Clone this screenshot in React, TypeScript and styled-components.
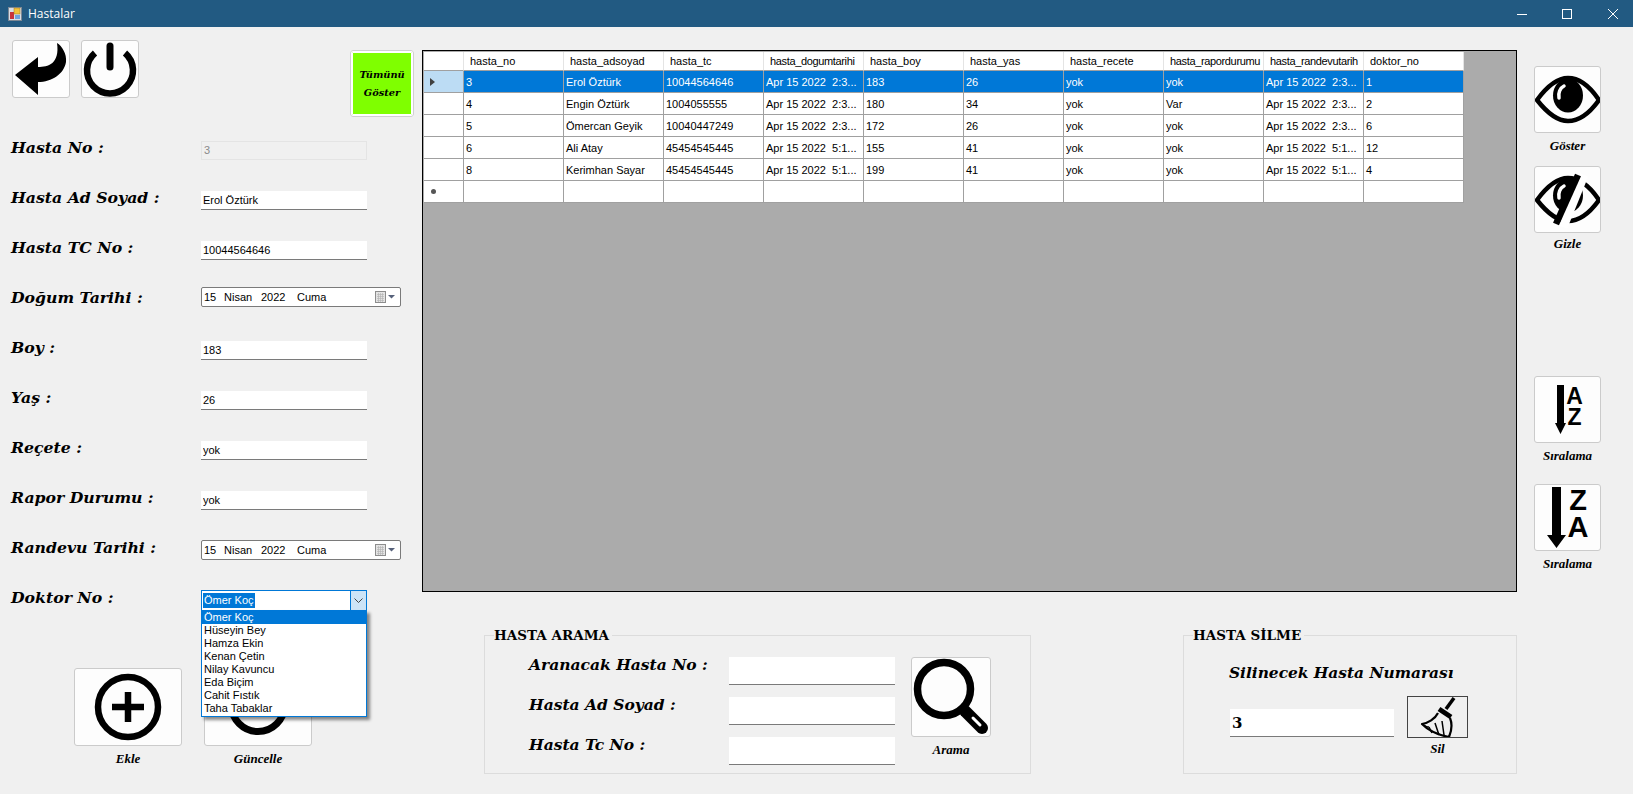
import * as React from "react";
import styled, { createGlobalStyle } from "styled-components";

const GlobalStyle = createGlobalStyle`
  html, body {
    margin: 0;
    padding: 0;
    background: #f0f0f0;
    overflow: hidden;
  }
  * { box-sizing: border-box; }
`;

const uiFont = `"Liberation Sans", Arial, sans-serif`;
const labelFont = `"DejaVu Serif", Georgia, serif`;
const captionFont = `"Liberation Serif", "Times New Roman", serif`;

const Window = styled.div`
  width: 1633px;
  height: 794px;
  display: flex;
  flex-direction: column;
  background: #f0f0f0;
  font-family: ${uiFont};
  overflow: hidden;
`;

const TitleBar = styled.div`
  height: 27px;
  flex: none;
  display: flex;
  align-items: center;
  background: #225a82;
  color: #fff;
  padding-left: 8px;
  font: 12px "Open Sans", sans-serif;
`;

const TitleText = styled.span`
  margin-left: 6px;
  flex: 1;
`;

const WinButton = styled.div<{ $w: number }>`
  width: ${(p) => p.$w}px;
  height: 27px;
  display: flex;
  align-items: center;
  justify-content: center;
`;

const Body = styled.div`
  flex: 1;
  display: flex;
  min-height: 0;
`;

const LeftPanel = styled.div`
  width: 422px;
  flex: none;
  padding-top: 13px;
`;

const TopRow = styled.div`
  height: 85px;
  display: flex;
  align-items: flex-start;
  padding-left: 12px;
`;

const SquareButton = styled.button<{ $w: number; $h: number; $ml?: number }>`
  width: ${(p) => p.$w}px;
  height: ${(p) => p.$h}px;
  margin-left: ${(p) => p.$ml ?? 0}px;
  padding: 0;
  flex: none;
  display: block;
  background: #fdfdfd;
  border: 1px solid #cbcbcb;
  border-radius: 3px;
  svg { display: block; width: 100%; height: 100%; }
`;

const ShowAllButton = styled.button`
  width: 64px;
  height: 67px;
  margin: 10px 0 0 211px;
  padding: 0;
  background: #7fff00;
  border: 2px solid #fff;
  outline: 1px solid #d0d0d0;
  outline-offset: -1px;
  border-radius: 3px;
  box-shadow: inset 0 0 0 1px #fff;
  color: #000;
  font: italic bold 9.8px/18px ${labelFont};
`;

const FormRow = styled.div`
  height: 50px;
  display: flex;
  align-items: center;
  padding-left: 11px;
`;

const FieldLabel = styled.div`
  width: 190px;
  flex: none;
  margin-top: -4px;
  color: #000;
  font: italic bold 15.7px/20px ${labelFont};
  white-space: nowrap;
`;

const TextBox = styled.input<{ $disabled?: boolean }>`
  width: 166px;
  height: 19px;
  padding: 0 2px;
  border: none;
  border-bottom: 1px solid #7a7a7a;
  background: #fff;
  color: #000;
  font: 11px ${uiFont};
  outline: none;
  ${(p) =>
    p.$disabled &&
    `
    background: #f0f0f0;
    border: 1px solid #e4e4e4;
    color: #8a8a8a;
  `}
`;

const DateBox = styled.div<{ $lift?: boolean }>`
  width: 200px;
  height: 20px;
  margin-top: ${(p) => (p.$lift ? "-6px" : "0")};
  display: flex;
  align-items: center;
  padding: 0 5px 0 2px;
  background: #fff;
  border: 1px solid #7a7a7a;
  border-radius: 2px;
  font-size: 11px;
  color: #000;
`;

const DatePart = styled.span<{ $w: number }>`
  width: ${(p) => p.$w}px;
  flex: none;
`;

const DateIcon = styled.span`
  margin-left: auto;
  display: flex;
`;

const ComboWrap = styled.div`
  position: relative;
  width: 166px;
`;

const ComboBox = styled.div`
  height: 21px;
  display: flex;
  align-items: center;
  padding-left: 1px;
  background: #fff;
  border: 1px solid #0078d7;
  font-size: 11px;
`;

const ComboValue = styled.span`
  background: #0078d7;
  color: #fff;
  padding: 1px;
  line-height: 13px;
`;

const ComboArrow = styled.span`
  margin-left: auto;
  width: 16px;
  height: 19px;
  display: flex;
  align-items: center;
  justify-content: center;
  background: #cce4f7;
  border-left: 1px solid #0078d7;
`;

const DropList = styled.ul`
  position: absolute;
  top: 20px;
  left: 0;
  width: 166px;
  height: 107px;
  margin: 0;
  padding: 0;
  list-style: none;
  background: #fff;
  border: 1px solid #0078d7;
  box-shadow: 3px 3px 3px rgba(0, 0, 0, 0.45);
  z-index: 5;
`;

const DropItem = styled.li<{ $active?: boolean }>`
  height: 13px;
  padding-left: 2px;
  font-size: 11px;
  line-height: 13px;
  background: ${(p) => (p.$active ? "#0078d7" : "#fff")};
  color: ${(p) => (p.$active ? "#fff" : "#000")};
`;

const ActionRow = styled.div`
  display: flex;
  margin: 43px 0 0 74px;
  gap: 22px;
`;

const ToolItem = styled.div<{ $mt?: number; $w?: number }>`
  width: ${(p) => (p.$w ? `${p.$w}px` : "auto")};
  margin-top: ${(p) => p.$mt ?? 0}px;
  display: flex;
  flex-direction: column;
  align-items: center;
`;

const Caption = styled.div<{ $mt?: number }>`
  margin-top: ${(p) => p.$mt ?? 1}px;
  color: #000;
  font: italic bold 13px/24px ${captionFont};
  white-space: nowrap;
`;

const Center = styled.div`
  width: 1095px;
  flex: none;
  padding-top: 23px;
`;

const GridFrame = styled.div`
  height: 542px;
  background: #ababab;
  border: 1px solid #000;
  overflow: hidden;
`;

const DataTable = styled.table`
  border-collapse: separate;
  border-spacing: 0;
  table-layout: fixed;
  width: 1040px;
  margin: 1px 0 0 1px;
  background: #fff;
  font-size: 11px;
  color: #000;
`;

const HeadCell = styled.th<{ $corner?: boolean; $tight?: boolean }>`
  width: ${(p) => (p.$corner ? 40 : 100)}px;
  height: 19px;
  padding: 0 0 0 6px;
  font-weight: normal;
  text-align: left;
  white-space: nowrap;
  overflow: hidden;
  letter-spacing: ${(p) => (p.$tight ? "-0.35px" : "0")};
  border-right: 1px solid #e4e4e4;
  border-bottom: 1px solid #a0a0a0;
`;

const RowHead = styled.td<{ $active?: boolean }>`
  height: 22px;
  padding: 0 0 0 6px;
  background: ${(p) => (p.$active ? "#bcdcf4" : "#fff")};
  border-right: 1px solid #a0a0a0;
  border-bottom: 1px solid #a0a0a0;
`;

const Cell = styled.td<{ $active?: boolean }>`
  height: 22px;
  padding: 0 0 0 2px;
  white-space: pre;
  overflow: hidden;
  background: ${(p) => (p.$active ? "#0078d7" : "#fff")};
  color: ${(p) => (p.$active ? "#fff" : "#000")};
  border-right: 1px solid #a0a0a0;
  border-bottom: 1px solid #a0a0a0;
`;

const Pointer = styled.span`
  display: block;
  width: 0;
  height: 0;
  border-left: 5px solid #404040;
  border-top: 4px solid transparent;
  border-bottom: 4px solid transparent;
`;

const NewRowMark = styled.span`
  display: block;
  width: 5px;
  height: 5px;
  margin-left: 1px;
  border-radius: 50%;
  background: #555;
`;

const BottomRow = styled.div`
  display: flex;
  justify-content: space-between;
  margin: 43px 0 0 62px;
`;

const Group = styled.div<{ $w: number }>`
  position: relative;
  width: ${(p) => p.$w}px;
  height: 139px;
  border: 1px solid #dcdcdc;
`;

const GroupTitle = styled.div`
  position: absolute;
  top: -9px;
  left: 9px;
  padding: 0 3px 0 0;
  background: #f0f0f0;
  color: #000;
  font: bold 13.5px/17px ${labelFont};
  white-space: nowrap;
`;

const SearchLayout = styled.div`
  display: flex;
  padding: 21px 0 0 44px;
`;

const SearchFields = styled.div`
  width: 382px;
  flex: none;
  display: flex;
  flex-direction: column;
  gap: 12px;
`;

const SearchRow = styled.div`
  display: flex;
  height: 28px;
`;

const SearchLabel = styled.div`
  width: 200px;
  flex: none;
  font: italic bold 15.5px/15px ${labelFont};
  white-space: nowrap;
  color: #000;
`;

const WideInput = styled.input<{ $w: number; $bold?: boolean }>`
  width: ${(p) => p.$w}px;
  height: 28px;
  padding: 0 2px;
  border: none;
  border-bottom: 1px solid #7a7a7a;
  background: #fff;
  outline: none;
  color: #000;
  font: ${(p) => (p.$bold ? `bold 15px ${labelFont}` : `11px ${uiFont}`)};
`;

const DeleteTitle = styled.div`
  margin: 27px 0 0 45px;
  color: #000;
  font: italic bold 15.4px/20px ${labelFont};
  white-space: nowrap;
`;

const DeleteRow = styled.div`
  display: flex;
  align-items: flex-start;
  margin: 13px 0 0 46px;
`;

const DeleteInputWrap = styled.div`
  margin-top: 13px;
  width: 177px;
  flex: none;
`;

const BroomButton = styled.button`
  width: 61px;
  height: 42px;
  padding: 0;
  display: block;
  background: #f0f0f0;
  border: 1px solid #444;
  svg { display: block; width: 100%; height: 100%; }
`;

const RightPanel = styled.div`
  flex: 1;
  padding: 39px 0 0 17px;
`;

const SortLetter = styled.text`
  font-family: ${uiFont};
  font-weight: bold;
  text-anchor: middle;
  fill: #000;
`;

const BackIcon = () => (
  <svg viewBox="0 0 56 56">
    <path d="M2 34 L25 16 V26 C35 26 47 23 44 2 C49 5 54 13 53 21 C51 33 39 41 25 41 V54 Z" fill="#000" />
  </svg>
);

const PowerIcon = () => (
  <svg viewBox="0 0 56 56" fill="none" stroke="#000">
    <path d="M13 12 A23 23 0 1 0 43 12" strokeWidth="6.5" />
    <path d="M28 5 V26" strokeWidth="7" strokeLinecap="round" />
  </svg>
);

const PlusIcon = () => (
  <svg viewBox="0 0 106 76" fill="none" stroke="#000">
    <circle cx="53" cy="38" r="30" strokeWidth="6.5" />
    <path d="M53 23 V53 M37 38 H69" strokeWidth="6.5" />
  </svg>
);

const RingIcon = () => (
  <svg viewBox="0 0 106 76" fill="none" stroke="#000">
    <circle cx="53" cy="36" r="26.5" strokeWidth="7" />
  </svg>
);

const eyeOutline = "M2 33 C13 18 23 11 33 11 C44 11 54 18 64 33 C54 47 44 54 33 54 C23 54 13 47 2 33 Z";

const EyeBase = () => (
  <>
    <path d={eyeOutline} fill="none" stroke="#000" strokeWidth="4.5" />
    <ellipse cx="33" cy="28.5" rx="15" ry="17" fill="#000" />
    <path d="M24 31 C23 26 25 21 29 19" fill="none" stroke="#fff" strokeWidth="3.5" strokeLinecap="round" />
  </>
);

const EyeIcon = () => (
  <svg viewBox="0 0 65 65">
    <EyeBase />
  </svg>
);

const EyeOffIcon = () => (
  <svg viewBox="0 0 65 65">
    <EyeBase />
    <path d="M49 8 L28 60" stroke="#fff" strokeWidth="9" />
    <path d="M43 8 L21 57" stroke="#000" strokeWidth="6.5" />
  </svg>
);

const SortIcon = ({ first, second, big }: { first: string; second: string; big?: boolean }) =>
  big ? (
    <svg viewBox="0 0 65 65">
      <path d="M17 2 H26 V50 H31 L21.5 63 L12 50 H17 Z" fill="#000" />
      <SortLetter x={43} y={25} fontSize={29}>{first}</SortLetter>
      <SortLetter x={43} y={52} fontSize={29}>{second}</SortLetter>
    </svg>
  ) : (
    <svg viewBox="0 0 65 65">
      <path d="M22 8 H29 V46 H31 L25.5 57 L20 46 H22 Z" fill="#000" />
      <SortLetter x={39.5} y={27} fontSize={23}>{first}</SortLetter>
      <SortLetter x={39.5} y={48} fontSize={23}>{second}</SortLetter>
    </svg>
  );

const SearchIcon = () => (
  <svg viewBox="0 0 78 78" fill="none">
    <circle cx="32" cy="31" r="26.5" stroke="#000" strokeWidth="7.5" />
    <path d="M53 53 L70 70" stroke="#000" strokeWidth="12" strokeLinecap="round" />
    <path d="M61 60 L68 67" stroke="#fff" strokeWidth="3" strokeLinecap="round" />
  </svg>
);

const BroomIcon = () => (
  <svg viewBox="0 0 59 40" fill="none" stroke="#000" strokeLinejoin="round">
    <path d="M46 1 L38 12" strokeWidth="3.5" />
    <path d="M31 12 L43 20" strokeWidth="5" />
    <path d="M30 16 C27 22 20 26 14 27 C20 33 30 38 41 40 C44 33 44 26 42 21" strokeWidth="2.2" />
    <path d="M14 27 C17 29 19 30 21 30 M21 30 L24 36 M27 26 L31 38 M34 24 L36 38" strokeWidth="1.5" />
  </svg>
);

const AppIcon = () => (
  <svg width="14" height="14" viewBox="0 0 14 14">
    <rect x="0.5" y="0.5" width="13" height="13" fill="#d8dee6" stroke="#7d8894" />
    <rect x="2" y="5" width="4" height="7" fill="#c8323c" />
    <rect x="6" y="1" width="6" height="6" fill="#f2c23c" stroke="#9a7a20" strokeWidth="0.5" />
    <rect x="7" y="8" width="5" height="4" fill="#6fa2dc" />
  </svg>
);

const CalendarIcon = () => (
  <svg width="20" height="12" viewBox="0 0 20 12">
    <rect x="0.5" y="0.5" width="10" height="11" fill="#e4e4e4" stroke="#8d8d8d" />
    <path d="M2 3.5 H9 M2 5.5 H9 M2 7.5 H9 M2 9.5 H9 M3.5 2 V11 M5.5 2 V11 M7.5 2 V11" stroke="#b0b0b0" strokeWidth="0.6" />
    <path d="M13 4 H20 L16.5 7.5 Z" fill="#56617a" />
  </svg>
);

const columns = [
  "hasta_no",
  "hasta_adsoyad",
  "hasta_tc",
  "hasta_dogumtarihi",
  "hasta_boy",
  "hasta_yas",
  "hasta_recete",
  "hasta_rapordurumu",
  "hasta_randevutarih",
  "doktor_no",
];

const rows = [
  ["3", "Erol Öztürk", "10044564646", "Apr 15 2022  2:3...", "183", "26", "yok", "yok", "Apr 15 2022  2:3...", "1"],
  ["4", "Engin Öztürk", "1004055555", "Apr 15 2022  2:3...", "180", "34", "yok", "Var", "Apr 15 2022  2:3...", "2"],
  ["5", "Ömercan Geyik", "10040447249", "Apr 15 2022  2:3...", "172", "26", "yok", "yok", "Apr 15 2022  2:3...", "6"],
  ["6", "Ali Atay", "45454545445", "Apr 15 2022  5:1...", "155", "41", "yok", "yok", "Apr 15 2022  5:1...", "12"],
  ["8", "Kerimhan Sayar", "45454545445", "Apr 15 2022  5:1...", "199", "41", "yok", "yok", "Apr 15 2022  5:1...", "4"],
];

const doctors = ["Ömer Koç", "Hüseyin Bey", "Hamza Ekin", "Kenan Çetin", "Nilay Kavuncu", "Eda Biçim", "Cahit Fıstık", "Taha Tabaklar"];

const DateField = ({ lift }: { lift?: boolean }) => (
  <DateBox $lift={lift}>
    <DatePart $w={20}>15</DatePart>
    <DatePart $w={37}>Nisan</DatePart>
    <DatePart $w={36}>2022</DatePart>
    <DatePart $w={30}>Cuma</DatePart>
    <DateIcon>
      <CalendarIcon />
    </DateIcon>
  </DateBox>
);

const TextField = ({ label, value, disabled }: { label: string; value: string; disabled?: boolean }) => (
  <FormRow>
    <FieldLabel>{label}</FieldLabel>
    <TextBox value={value} readOnly $disabled={disabled} />
  </FormRow>
);

export default function App() {
  return (
    <Window>
      <GlobalStyle />
      <TitleBar>
        <AppIcon />
        <TitleText>Hastalar</TitleText>
        <WinButton $w={38}>
          <svg width="10" height="10" viewBox="0 0 10 10"><path d="M0 5.5 H10" stroke="#fff" /></svg>
        </WinButton>
        <WinButton $w={52}>
          <svg width="10" height="10" viewBox="0 0 10 10"><rect x="0.5" y="0.5" width="9" height="9" fill="none" stroke="#fff" /></svg>
        </WinButton>
        <WinButton $w={40}>
          <svg width="10" height="10" viewBox="0 0 10 10"><path d="M0 0 L10 10 M10 0 L0 10" stroke="#fff" /></svg>
        </WinButton>
      </TitleBar>
      <Body>
        <LeftPanel>
          <TopRow>
            <SquareButton $w={58} $h={58}><BackIcon /></SquareButton>
            <SquareButton $w={58} $h={58} $ml={11}><PowerIcon /></SquareButton>
            <ShowAllButton>Tümünü<br />Göster</ShowAllButton>
          </TopRow>
          <TextField label="Hasta No :" value="3" disabled />
          <TextField label="Hasta Ad Soyad :" value="Erol Öztürk" />
          <TextField label="Hasta TC No :" value="10044564646" />
          <FormRow>
            <FieldLabel>Doğum Tarihi :</FieldLabel>
            <DateField lift />
          </FormRow>
          <TextField label="Boy :" value="183" />
          <TextField label="Yaş :" value="26" />
          <TextField label="Reçete :" value="yok" />
          <TextField label="Rapor Durumu :" value="yok" />
          <FormRow>
            <FieldLabel>Randevu Tarihi :</FieldLabel>
            <DateField />
          </FormRow>
          <FormRow>
            <FieldLabel>Doktor No :</FieldLabel>
            <ComboWrap>
              <ComboBox>
                <ComboValue>Ömer Koç</ComboValue>
                <ComboArrow>
                  <svg width="9" height="5" viewBox="0 0 9 5"><path d="M0.5 0.5 L4.5 4.5 L8.5 0.5" fill="none" stroke="#444" /></svg>
                </ComboArrow>
              </ComboBox>
              <DropList>
                {doctors.map((d, i) => (
                  <DropItem key={d} $active={i === 0}>{d}</DropItem>
                ))}
              </DropList>
            </ComboWrap>
          </FormRow>
          <ActionRow>
            <ToolItem>
              <SquareButton $w={108} $h={78}><PlusIcon /></SquareButton>
              <Caption>Ekle</Caption>
            </ToolItem>
            <ToolItem>
              <SquareButton $w={108} $h={78}><RingIcon /></SquareButton>
              <Caption>Güncelle</Caption>
            </ToolItem>
          </ActionRow>
        </LeftPanel>

        <Center>
          <GridFrame>
            <DataTable>
              <thead>
                <tr>
                  <HeadCell $corner />
                  {columns.map((c) => (
                    <HeadCell key={c} $tight={c.length > 15}>{c}</HeadCell>
                  ))}
                </tr>
              </thead>
              <tbody>
                {rows.map((r, i) => (
                  <tr key={r[0]}>
                    <RowHead $active={i === 0}>{i === 0 && <Pointer />}</RowHead>
                    {r.map((v, j) => (
                      <Cell key={j} $active={i === 0}>{v}</Cell>
                    ))}
                  </tr>
                ))}
                <tr>
                  <RowHead><NewRowMark /></RowHead>
                  {columns.map((c) => (
                    <Cell key={c} />
                  ))}
                </tr>
              </tbody>
            </DataTable>
          </GridFrame>

          <BottomRow>
            <Group $w={547}>
              <GroupTitle>HASTA ARAMA</GroupTitle>
              <SearchLayout>
                <SearchFields>
                  <SearchRow>
                    <SearchLabel>Aranacak Hasta No :</SearchLabel>
                    <WideInput $w={166} readOnly />
                  </SearchRow>
                  <SearchRow>
                    <SearchLabel>Hasta Ad Soyad :</SearchLabel>
                    <WideInput $w={166} readOnly />
                  </SearchRow>
                  <SearchRow>
                    <SearchLabel>Hasta Tc No :</SearchLabel>
                    <WideInput $w={166} readOnly />
                  </SearchRow>
                </SearchFields>
                <ToolItem>
                  <SquareButton $w={80} $h={80}><SearchIcon /></SquareButton>
                  <Caption>Arama</Caption>
                </ToolItem>
              </SearchLayout>
            </Group>
            <Group $w={334}>
              <GroupTitle>HASTA SİLME</GroupTitle>
              <DeleteTitle>Silinecek Hasta Numarası</DeleteTitle>
              <DeleteRow>
                <DeleteInputWrap>
                  <WideInput $w={164} $bold value="3" readOnly />
                </DeleteInputWrap>
                <ToolItem>
                  <BroomButton><BroomIcon /></BroomButton>
                  <Caption $mt={-1}>Sil</Caption>
                </ToolItem>
              </DeleteRow>
            </Group>
          </BottomRow>
        </Center>

        <RightPanel>
          <ToolItem $w={67}>
            <SquareButton $w={67} $h={67}><EyeIcon /></SquareButton>
            <Caption>Göster</Caption>
          </ToolItem>
          <ToolItem $w={67} $mt={8}>
            <SquareButton $w={67} $h={67}><EyeOffIcon /></SquareButton>
            <Caption $mt={-1}>Gizle</Caption>
          </ToolItem>
          <ToolItem $w={67} $mt={120}>
            <SquareButton $w={67} $h={67}><SortIcon first="A" second="Z" /></SquareButton>
            <Caption>Sıralama</Caption>
          </ToolItem>
          <ToolItem $w={67} $mt={16}>
            <SquareButton $w={67} $h={67}><SortIcon first="Z" second="A" big /></SquareButton>
            <Caption>Sıralama</Caption>
          </ToolItem>
        </RightPanel>
      </Body>
    </Window>
  );
}
